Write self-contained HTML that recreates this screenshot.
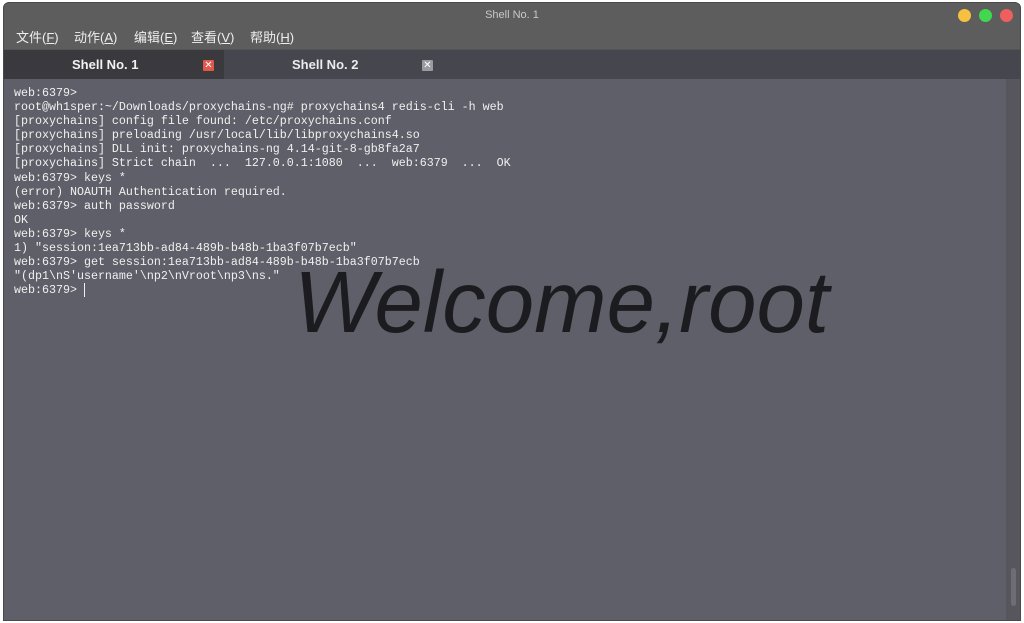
<!DOCTYPE html>
<html><head><meta charset="utf-8"><style>
body{margin:0;width:1024px;height:623px;background:#fff;position:relative;overflow:hidden;font-family:"Liberation Sans","Noto Sans CJK SC",sans-serif}
.win{position:absolute;left:3px;top:2px;width:1018px;height:619px;background:#5d5d5d;border-radius:6px 6px 0 0;overflow:hidden;border:1px solid #4a4a4a;box-sizing:border-box}
.title{position:absolute;top:0;left:0;right:0;height:24px;text-align:center;color:#c8c8c8;font-size:11px;line-height:24px;padding-left:0}
.dot{position:absolute;top:6px;width:13px;height:13px;border-radius:50%}
.menu{position:absolute;top:24px;left:0;right:0;height:22px;font-size:13px;color:#eee;line-height:22px}
.menu span{position:absolute}
.tabs{position:absolute;top:46px;left:0;right:0;height:30px;background:#46464f;border-top:1px solid #555}
.tab{position:absolute;top:0;height:29px;font-size:13px;font-weight:bold;color:#f2f2f2;line-height:29px;text-align:center}
.x{position:absolute;top:10px;width:11px;height:11px;font-size:10px;line-height:11px;text-align:center;color:#fff;border-radius:1px}
.term{position:absolute;top:76px;left:0;right:0;bottom:0;background:#5f5f69}
pre{position:absolute;left:10px;top:7px;margin:0;font-family:"Liberation Mono",monospace;font-size:11.67px;line-height:14.1px;color:#f0f0f0}
.big{position:absolute;left:290px;top:174px;font-size:87px;font-style:italic;color:#1c1c20;white-space:nowrap}
.sb{position:absolute;right:0;top:0;bottom:0;width:14px;background:#56565c}
.thumb{position:absolute;right:4px;top:489px;width:5px;height:38px;border-radius:3px;background:#6d6d73}
</style></head><body>
<div class="win">
<div class="title">Shell No. 1</div>
<div class="dot" style="left:954px;background:#f6c141"></div>
<div class="dot" style="left:975px;background:#41d84f"></div>
<div class="dot" style="left:996px;background:#f05f5f"></div>
<div class="menu"><span style="left:12px">文件(<u>F</u>)</span><span style="left:70px">动作(<u>A</u>)</span><span style="left:130px">编辑(<u>E</u>)</span><span style="left:187px">查看(<u>V</u>)</span><span style="left:246px">帮助(<u>H</u>)</span></div>
<div class="tabs">
<div class="tab" style="left:0;width:220px;background:#3a3a3e;"><span style="position:absolute;left:68px">Shell No. 1</span></div>
<div class="x" style="left:199px;background:#e0574b">✕</div>
<div class="tab" style="left:221px;width:210px;font-weight:normal"><span style="position:absolute;left:67px;font-weight:bold;color:#ececec">Shell No. 2</span></div>
<div class="x" style="left:418px;background:#9a9aa0">✕</div>
</div>
<div class="term">
<pre>web:6379&gt;
root@wh1sper:~/Downloads/proxychains-ng# proxychains4 redis-cli -h web
[proxychains] config file found: /etc/proxychains.conf
[proxychains] preloading /usr/local/lib/libproxychains4.so
[proxychains] DLL init: proxychains-ng 4.14-git-8-gb8fa2a7
[proxychains] Strict chain  ...  127.0.0.1:1080  ...  web:6379  ...  OK
web:6379&gt; keys *
(error) NOAUTH Authentication required.
web:6379&gt; auth password
OK
web:6379&gt; keys *
1) "session:1ea713bb-ad84-489b-b48b-1ba3f07b7ecb"
web:6379&gt; get session:1ea713bb-ad84-489b-b48b-1ba3f07b7ecb
"(dp1\nS'username'\np2\nVroot\np3\ns."
web:6379&gt; <span style="border-left:1px solid #eee"> </span></pre>
<div class="big">Welcome,root</div>
<div class="sb"><div class="thumb"></div></div>
</div>
</div>
</body></html>
